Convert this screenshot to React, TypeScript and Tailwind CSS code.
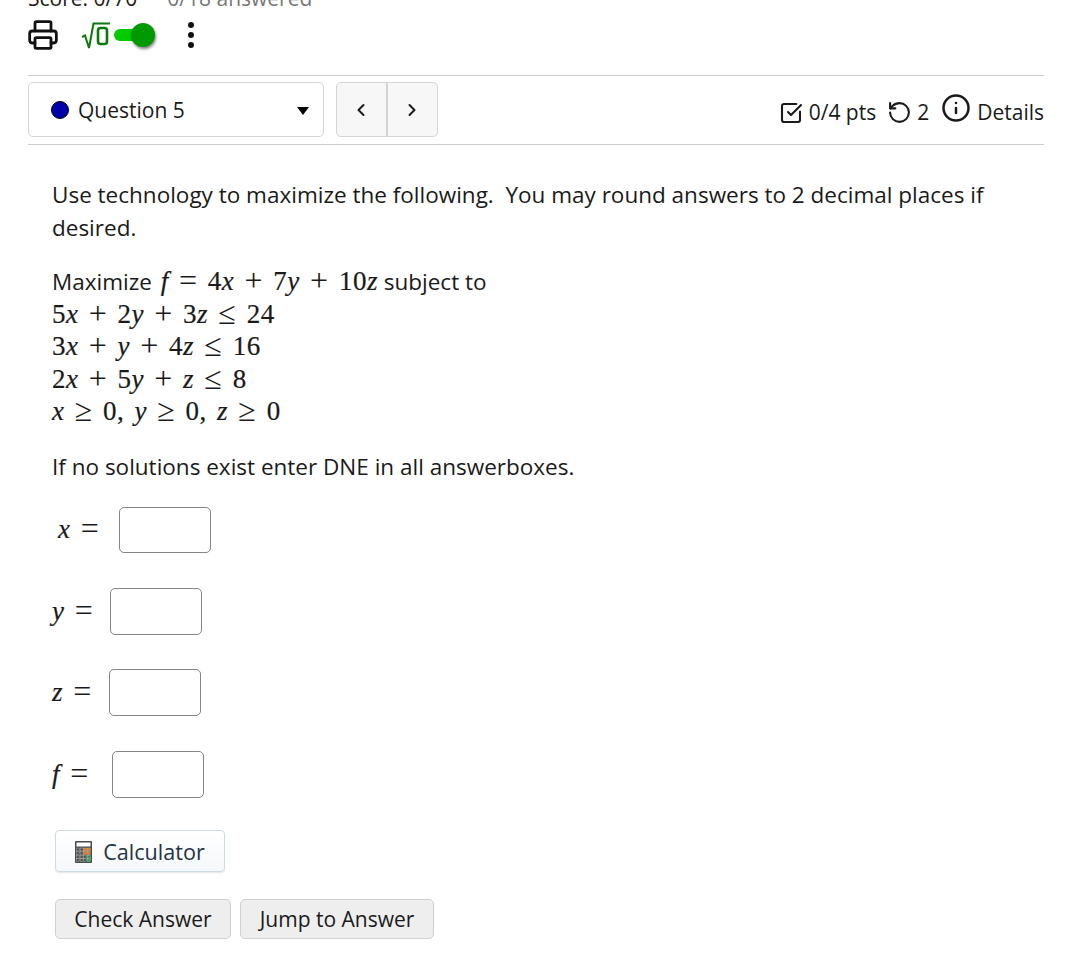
import { ChevronLeft, ChevronRight, RotateCcw, SquareCheckBig, Info, Printer } from "lucide-react";

const M = ({ children }: { children: React.ReactNode }) => (
  <span className="font-['Liberation_Serif',serif] text-[27px] leading-none tracking-[0.5px] [word-spacing:3px] [-webkit-text-stroke:0.2px]">{children}</span>
);
const I = ({ children }: { children: React.ReactNode }) => <i>{children}</i>;
const O = ({ children }: { children: React.ReactNode }) => (
  <span className="align-[-1px] text-[32px] leading-[0] [-webkit-text-stroke:0px]">{children}</span>
);

function Answer({ v, ml, mt, w, h }: { v: string; ml: string; mt: string; w: string; h: string }) {
  return (
    <div className={`flex items-center ${ml} ${mt}`}>
      <div className={w}>
        <M>
          <I>{v}</I> <O>=</O>
        </M>
      </div>
      <div className={`${h} w-[92px] rounded-[5px] border border-[#858585] bg-white`} />
    </div>
  );
}

function Calc() {
  const cells = ["#555", "#555", "#e07a1f", "#e07a1f", "#555", "#555", "#e07a1f", "#e07a1f", "#555", "#555", "#555", "#1fa84a", "#555", "#555", "#555", "#1fa84a"];
  return (
    <svg width="17" height="22" viewBox="0 0 17 22">
      <rect width="17" height="22" rx="1" fill="#4a4a4a" />
      <rect x="1.5" y="1.5" width="14" height="4" fill="#fff" />
      {cells.map((c, i) => (
        <rect key={i} x={1.5 + (i % 4) * 3.6} y={7 + Math.floor(i / 4) * 3.6} width="3" height="3" fill={c} stroke="#ddd" strokeWidth="0.3" />
      ))}
    </svg>
  );
}

export default function App() {
  return (
    <div className="h-[970px] w-[1066px] overflow-hidden bg-white pl-[28px] pr-[22px] font-['Open_Sans',sans-serif] text-[#1a1a1a]">
      <div className="-mt-[13px] flex h-[24px] items-center gap-[30px] text-[21px]">
        <span>Score: 0/70</span>
        <span className="text-[#777]">0/18 answered</span>
      </div>
      <div className="mt-[4px] flex h-[40px] items-center">
        <Printer size={32} strokeWidth={2.1} className="-ml-[1px] text-[#111]" />
        <svg width="30" height="30" viewBox="0 0 30 30" className="ml-[22px] text-[#0a7a0a]">
          <path d="M1 17 L4 15.5 L8 28 L12.5 3.5 H29" fill="none" stroke="currentColor" strokeWidth="2" />
          <rect x="17" y="8" width="9" height="16" rx="2.5" fill="none" stroke="currentColor" strokeWidth="2.6" />
        </svg>
        <span className="relative ml-[3px] block h-[12px] w-[32px] rounded-full bg-[#00cc00]">
          <span className="absolute -top-[6px] -right-[9px] h-[24px] w-[24px] rounded-full bg-[#009900] shadow-[1px_2px_3px_rgba(0,0,0,0.5)]" />
        </span>
        <span className="ml-[42px] flex flex-col gap-[4px]">
          <span className="h-[6px] w-[6px] rounded-full bg-[#111]" />
          <span className="h-[6px] w-[6px] rounded-full bg-[#111]" />
          <span className="h-[6px] w-[6px] rounded-full bg-[#111]" />
        </span>
      </div>
      <div className="mt-[20px] flex h-[70px] items-center border-y border-[#ccc]">
        <div className="mt-[6px] flex h-[55px] w-[296px] items-center self-start rounded-[5px] border border-[#d4d4d4] bg-white pl-[22px] pr-[14px] pt-[2px] text-[21px]">
          <span className="-mt-[1px] h-[18px] w-[18px] rounded-full border border-black bg-[#0000aa]" />
          <span className="ml-[9px] flex-1">Question 5</span>
          <span className="h-0 w-0 border-x-[6px] border-t-[8px] border-x-transparent border-t-black" />
        </div>
        <div className="ml-[12px] mt-[6px] flex h-[55px] w-[102px] self-start rounded-[5px] border border-[#d4d4d4] bg-[#f7f7f7]">
          <span className="flex w-[51px] items-center justify-center border-r-2 border-[#d4d4d4] pr-[2px]">
            <ChevronLeft size={20} strokeWidth={2.4} />
          </span>
          <span className="flex flex-1 items-center justify-center pr-[2px]">
            <ChevronRight size={20} strokeWidth={2.4} />
          </span>
        </div>
        <div className="ml-auto flex items-center pt-[6px] text-[21px]">
          <SquareCheckBig size={24} strokeWidth={2.1} />
          <span className="ml-[6px]">0/4 pts</span>
          <RotateCcw size={25} strokeWidth={2} className="ml-[11px] -mt-[2px]" />
          <span className="ml-[5px]">2</span>
          <Info size={30} strokeWidth={2} className="ml-[12px] -mt-[10px]" />
          <span className="ml-[6px]">Details</span>
        </div>
      </div>
      <div className="px-[24px] pt-[34px] text-[22.5px] leading-[32.5px]">
        <p>Use technology to maximize the following.&nbsp; You may round answers to 2 decimal places if desired.</p>
        <p className="mt-[22px]">
          Maximize{" "}
          <span className="ml-[3px]">
            <M>
              <I>f</I> <O>=</O> 4<I>x</I> <O>+</O> 7<I>y</I> <O>+</O> 10<I>z</I>
            </M>
          </span>{" "}
          subject to
          <br />
          <M>5<I>x</I> <O>+</O> 2<I>y</I> <O>+</O> 3<I>z</I> <O>≤</O> 24</M>
          <br />
          <M>3<I>x</I> <O>+</O> <I>y</I> <O>+</O> 4<I>z</I> <O>≤</O> 16</M>
          <br />
          <M>2<I>x</I> <O>+</O> 5<I>y</I> <O>+</O> <I>z</I> <O>≤</O> 8</M>
          <br />
          <M><I>x</I> <O>≥</O> 0, <I>y</I> <O>≥</O> 0, <I>z</I> <O>≥</O> 0</M>
        </p>
        <p className="mt-[22px]">If no solutions exist enter DNE in all answerboxes.</p>
      </div>
      <div className="mt-[24px] px-[24px]">
        <Answer v="x" ml="ml-[6px]" mt="mt-0" w="w-[61px]" h="h-[46px]" />
        <Answer v="y" ml="ml-0" mt="mt-[35px]" w="w-[58px]" h="h-[47px]" />
        <Answer v="z" ml="ml-0" mt="mt-[34px]" w="w-[57px]" h="h-[47px]" />
        <Answer v="f" ml="ml-0" mt="mt-[35px]" w="w-[60px]" h="h-[47px]" />
      </div>
      <div className="ml-[27px] mt-[32px] flex h-[42px] w-[170px] items-center justify-center gap-[11px] rounded-[4px] border border-[#cfdbe2] bg-gradient-to-b from-white to-[#f5f8fb] pt-[2px] text-[21.6px] text-[#223344] shadow-[0_1px_1px_rgba(0,0,0,0.1)]">
        <Calc />
        <span>Calculator</span>
      </div>
      <div className="ml-[27px] mt-[27px] flex gap-[9px] text-[21px]">
        <button className="h-[40px] w-[176px] rounded-[5px] border border-[#d0d0d0] bg-[#eeeeee] pt-[2px]">Check Answer</button>
        <button className="h-[40px] w-[194px] rounded-[5px] border border-[#d0d0d0] bg-[#eeeeee] pt-[2px]">Jump to Answer</button>
      </div>
    </div>
  );
}
